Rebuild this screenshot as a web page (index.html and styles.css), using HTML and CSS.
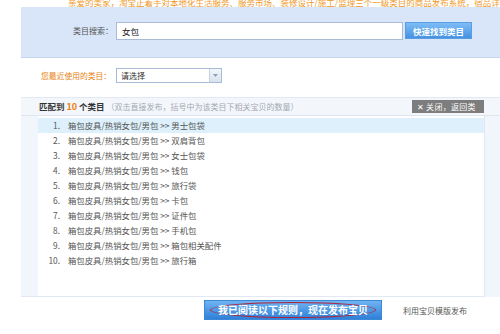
FILE: index.html
```html
<!DOCTYPE html>
<html lang="zh-CN">
<head>
  <meta charset="UTF-8" />
  <title>选择类目</title>
  <link rel="stylesheet" href="styles.css">
</head>
<body>

<div class="notice">亲爱的卖家，淘宝正着手对本地化生活服务、服务市场、装修设计/施工/监理三个一级类目的商品发布系统，宿品详情展示</div>

<!-- search -->
<div class="search-panel">
  <label class="search-label">类目搜索：</label>
  <input class="search-input" type="text" value="女包">
  <button class="btn-find">快速找到类目</button>
</div>

<!-- recent -->
<div class="recent">
  <label class="recent-label">您最近使用的类目：</label>
  <div class="select">
    <span>请选择</span>
    <span class="select-arrow">
      <svg width="5" height="3" viewBox="0 0 7 4"><path d="M0 0h7L3.5 4z" fill="#8aa0bd"/></svg>
    </span>
  </div>
</div>

<!-- results -->
<div class="results">
  <div class="results-head">
    <span><b>匹配到 <em>10</em> 个类目</b> <span class="hint">（双击直接发布，括号中为该类目下相关宝贝的数量）</span></span>
    <span class="btn-close">✕ 关闭，返回类目</span>
  </div>
  <div class="results-body">
    <div class="side"></div>
    <ol class="cat-list">
      <li class="active"><span class="num">1.</span>箱包皮具/热销女包/男包 &gt;&gt; 男士包袋</li>
      <li><span class="num">2.</span>箱包皮具/热销女包/男包 &gt;&gt; 双肩背包</li>
      <li><span class="num">3.</span>箱包皮具/热销女包/男包 &gt;&gt; 女士包袋</li>
      <li><span class="num">4.</span>箱包皮具/热销女包/男包 &gt;&gt; 钱包</li>
      <li><span class="num">5.</span>箱包皮具/热销女包/男包 &gt;&gt; 旅行袋</li>
      <li><span class="num">6.</span>箱包皮具/热销女包/男包 &gt;&gt; 卡包</li>
      <li><span class="num">7.</span>箱包皮具/热销女包/男包 &gt;&gt; 证件包</li>
      <li><span class="num">8.</span>箱包皮具/热销女包/男包 &gt;&gt; 手机包</li>
      <li><span class="num">9.</span>箱包皮具/热销女包/男包 &gt;&gt; 箱包相关配件</li>
      <li><span class="num">10.</span>箱包皮具/热销女包/男包 &gt;&gt; 旅行箱</li>
    </ol>
    <div class="side side-right"></div>
  </div>
</div>

<!-- actions -->
<div class="actions">
  <button class="btn-publish"><span class="mark">我已阅读以下规则，现在发布宝贝</span></button>
  <a class="tpl-link" href="#">利用宝贝模版发布</a>
</div>

</body>
</html>
```

FILE: styles.css
```css
body {
  margin: 0;
  width: 500px;
  height: 334px;
  overflow: hidden;
  background: #fff;
  font-family: "Noto Sans CJK SC", "DejaVu Sans", sans-serif;
  font-size: 8px;
  color: #444;
}

.notice {
  height: 7px;
  overflow: hidden;
  white-space: nowrap;
  padding-left: 68px;
  color: #ef9a2a;
  font-size: 8.5px;
  line-height: 4px;
}

.search-panel {
  margin-left: 21px;
  height: 51px;
  background: #d9e5f8;
  border-bottom: 1px solid #c9d7ee;
  display: flex;
  align-items: center;
  padding-left: 52px;
  box-sizing: border-box;
  padding-bottom: 3px;
}
.search-label {
  width: 43px;
  font-size: 8px;
  color: #555;
}
.search-input {
  width: 287px;
  height: 18px;
  box-sizing: border-box;
  margin: 0;
  border: 1px solid #a9bbd6;
  padding: 0 5px;
  font: 8.5px "Noto Sans CJK SC", sans-serif;
  color: #222;
}
.btn-find {
  margin-left: 2px;
  width: 67px;
  height: 17px;
  padding: 0;
  border: 1px solid #5a9de2;
  background: linear-gradient(#7dbdf6, #4592e2);
  color: #fff;
  font: bold 8.5px "Noto Sans CJK SC", sans-serif;
}

.recent {
  display: flex;
  align-items: center;
  height: 39px;
  padding-left: 41px;
  padding-bottom: 5px;
  box-sizing: border-box;
}
.recent-label {
  width: 75px;
  color: #e88312;
  font-size: 7.8px;
}
.select {
  width: 106px;
  height: 15px;
  box-sizing: border-box;
  border: 1px solid #a9bbd6;
  display: flex;
  justify-content: space-between;
  align-items: center;
  padding-left: 4px;
  font-size: 8px;
  color: #333;
}
.select-arrow {
  width: 11px;
  height: 13px;
  background: linear-gradient(#f2f6fb, #d8e2ee);
  border-left: 1px solid #c5d2e2;
  display: flex;
  align-items: center;
  justify-content: center;
}

.results {
  margin-left: 21px;
  border-top: 1px solid #e3e9f2;
}
.results-head {
  height: 17px;
  background: #f3f7fc;
  border-bottom: 1px solid #dfe6ef;
  display: flex;
  justify-content: space-between;
  align-items: center;
  padding: 0 16px 0 18px;
  font-size: 8.5px;
  color: #333;
}
.results-head b {
  font-weight: bold;
}
.results-head em {
  font-style: normal;
  color: #ef7d12;
  font-size: 9px;
}
.hint {
  color: #a4a8b0;
  font-size: 8px;
}
.btn-close {
  background: #7d7d7d;
  color: #fff;
  height: 13px;
  width: 72px;
  line-height: 13px;
  padding-left: 5px;
  box-sizing: border-box;
  font-size: 8px;
  letter-spacing: 0.3px;
}

.results-body {
  display: flex;
  height: 181px;
}
.side {
  width: 17px;
  background: #f1f5fc;
  border-bottom: 1px solid #e3e9f2;
}
.side-right {
  flex: 1;
  border-left: 1px solid #e3e7ee;
  border-bottom: 0;
}
.cat-list {
  list-style: none;
  margin: 0;
  padding: 2px 0 0;
  width: 446px;
  border-bottom: 1px solid #e3e9f2;
}
.cat-list li {
  height: 15px;
  line-height: 15px;
  font-size: 8.4px;
  color: #555;
  display: flex;
}
.cat-list li.active {
  background: #ddf0fb;
}
.num {
  width: 22px;
  text-align: right;
  padding-right: 8px;
}

.actions {
  display: flex;
  align-items: center;
  padding: 3px 0 0 204px;
}
.btn-publish {
  width: 178px;
  height: 20px;
  padding: 0;
  border: 1px solid #3d87d8;
  background: linear-gradient(#6fb3f2, #2f80d8);
  color: #fff;
  font: bold 10px "Noto Sans CJK SC", sans-serif;
  display: flex;
  justify-content: center;
  align-items: center;
}
.mark {
  border: 1px solid #b0223a;
  border-radius: 50%;
  padding: 1px 7px;
  line-height: 12px;
}
.tpl-link {
  margin-left: 21px;
  margin-top: 1px;
  font-size: 8px;
  color: #555;
  text-decoration: none;
}
```
